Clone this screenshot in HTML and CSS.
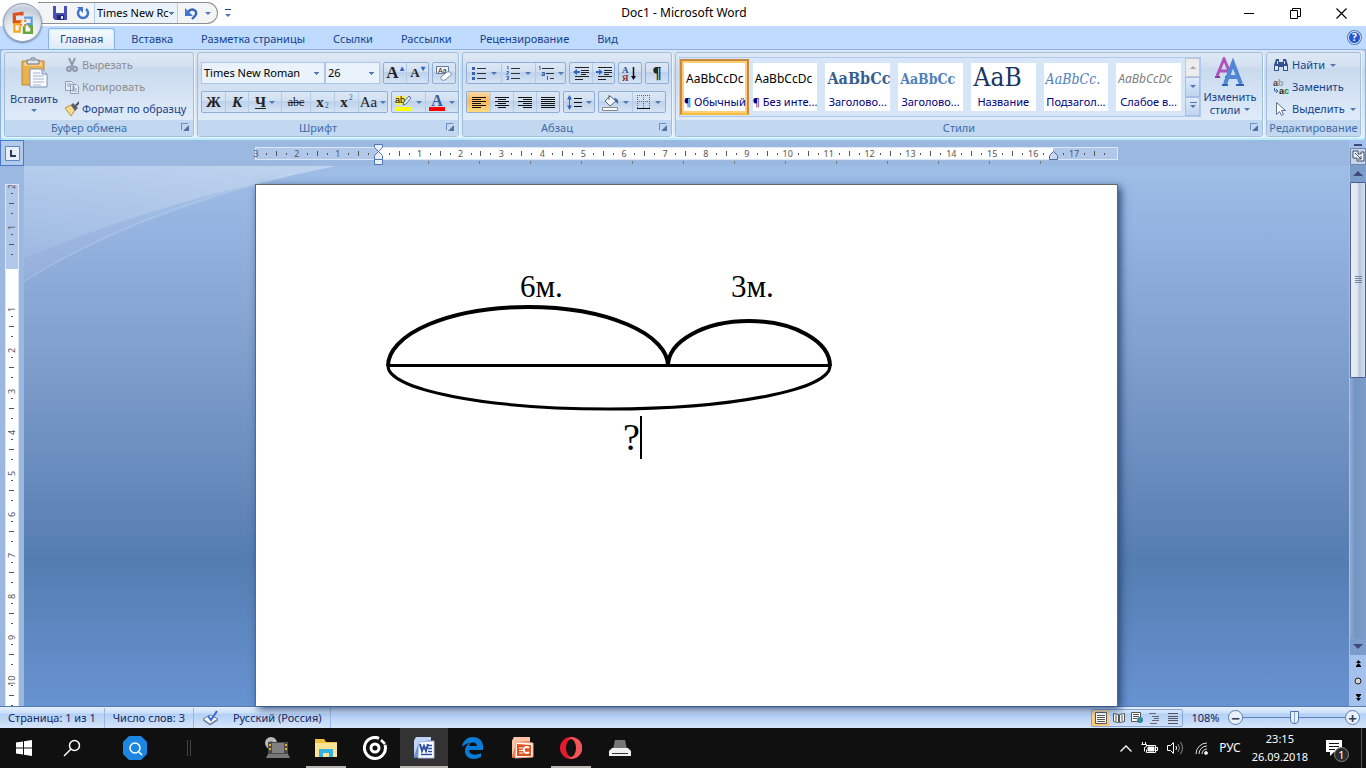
FILE: index.html
```html
<!DOCTYPE html>
<html lang="ru">

<head>
  <meta charset="UTF-8">
  <meta name="viewport" content="width=device-width, initial-scale=1.0">
  <title>Doc1 - Microsoft Word</title>
  <link rel="stylesheet" href="styles.css">
</head>

<body>
  <div class="window">

    <header class="titlebar">
      <div class="quick-wrap">
        <div class="quick">
          <button class="quick-btn" aria-label="Сохранить">
            <svg width="14" height="14" viewBox="0 0 14 14"><path d="M0 0h14v14H2L0 12z" fill="#4a4fb4"/><path d="M3 0h8v7H3z" fill="#f2f5ff"/><path d="M4 9h7v5H4z" fill="#23276f"/><path d="M8 10h2v3H8z" fill="#dde4ff"/></svg>
          </button>
          <button class="quick-btn" aria-label="Повторить">
            <svg width="14" height="14" viewBox="0 0 14 14"><path d="M4 3a5 5 0 1 0 6 0" fill="none" stroke="#3e74cf" stroke-width="2.400"/><path d="M1 1h6v6z" fill="#3e74cf"/></svg>
          </button>
          <select class="quick-font" aria-label="Шрифт">
            <option>Times New Rc</option>
          </select>
          <button class="quick-btn quick-undo" aria-label="Отменить">
            <svg width="14" height="13" viewBox="0 0 14 13"><path d="M4 5c4-5 11-1 7 4L8 12" fill="none" stroke="#3566bd" stroke-width="2.400"/><path d="M1 1v8h8z" fill="#3f78d2"/></svg>
            <i class="arrow"></i>
          </button>
        </div>
        <button class="quick-more" aria-label="Настройка панели"><i class="arrow"></i></button>
      </div>
      <h1 class="title">Doc1 - Microsoft Word</h1>
      <div class="win-btns">
        <button aria-label="Свернуть"><svg width="11" height="11" viewBox="0 0 11 11"><path d="M0 5.500h10" stroke="#000"/></svg></button>
        <button aria-label="Восстановить"><svg width="11" height="11" viewBox="0 0 11 11"><path d="M.5 2.500h7v8h-7zM2.500 2V.5h8v8H8" fill="none" stroke="#000"/></svg></button>
        <button aria-label="Закрыть"><svg width="11" height="11" viewBox="0 0 11 11"><path d="M.5.5l10 10M10.500.5l-10 10" stroke="#000" stroke-width="1.200"/></svg></button>
      </div>
    </header>

    <button class="office" aria-label="Office">
      <svg width="24" height="26" viewBox="0 0 22 24" fill="none" stroke-width="3">
        <path d="M10 5V3L3 4v7h6" stroke="#e0501c"/>
        <path d="M12 7h7v6h-5" stroke="#5b9ce0" stroke-width="2"/>
        <path d="M9 13H3v7h5v-5" stroke="#f5a81e" stroke-width="2"/>
        <path d="M12 15v6h7v-6h-3" stroke="#6aa53a" stroke-width="2.500"/>
        <path d="M8 9h2v2H8zM12 9h2v2h-2zM8 13h2v2H8zM12 13h2v2h-2z" fill="#f08a1c"/>
      </svg>
    </button>

    <nav class="tabs">
      <a href="#" class="tab tab-active">Главная</a>
      <a href="#" class="tab">Вставка</a>
      <a href="#" class="tab">Разметка страницы</a>
      <a href="#" class="tab">Ссылки</a>
      <a href="#" class="tab">Рассылки</a>
      <a href="#" class="tab">Рецензирование</a>
      <a href="#" class="tab">Вид</a>
      <button class="help" aria-label="Справка">?</button>
    </nav>

    <div class="ribbon">
      <!-- Буфер обмена -->
      <section class="group clipboard">
        <div class="group-body">
          <button class="big-btn">
            <svg width="28" height="32" viewBox="0 0 28 32">
              <path d="M2 4h22v24H2z" fill="#e9b050" stroke="#c08a35"/><path d="M4 5h18v4H4z" fill="#f6cf85"/>
              <path d="M7 3h3c0-3 6-3 6 0h3v4H7z" fill="#dfe3ea" stroke="#6f7682"/><path d="M11 3h4" stroke="#6f7682"/>
              <path d="M10 12h12l5 5v13H10z" fill="#fafcff" stroke="#7a92b5"/><path d="M22 12v5h5" fill="#cfdcf0" stroke="#7a92b5"/>
              <path d="M13 16h7M13 19h11M13 22h11M13 25h11M13 28h8" stroke="#9fb2d0"/>
            </svg>
            <span>Вставить</span>
            <i class="arrow"></i>
          </button>
          <div class="rows">
            <button class="row-btn muted" disabled>
              <svg width="14" height="16" viewBox="1 0 14 16" fill="none" stroke="#8f9bad" stroke-width="2"><path d="M5 1l4 9M11 1L7 10"/><circle cx="5" cy="12" r="2"/><circle cx="11" cy="12" r="2"/></svg>
              Вырезать
            </button>
            <button class="row-btn muted" disabled>
              <svg width="14" height="16" viewBox="1 0 14 16"><path d="M1.500 2.500h6l2 2v7h-8zM6.500 5.500h6l2 2v7h-8z" fill="#e8edf6" stroke="#8f9fb8"/><path d="M3 5h4M3 7h3M8 8h3M8 10h5M8 12h5" stroke="#8f9fb8"/></svg>
              Копировать
            </button>
            <button class="row-btn">
              <svg width="14" height="16" viewBox="1 1 14 14"><path d="M1 7l6-3 4 5-4 6z" fill="#f7dc8c" stroke="#b98d3a"/><path d="M7 4l2-2 5 5-3 3z" fill="#59606e"/><path d="M11 4l4-4 1 2-4 4z" fill="#4c5363"/></svg>
              Формат по образцу
            </button>
          </div>
        </div>
        <footer class="group-name">Буфер обмена<i class="launcher"></i></footer>
      </section>

      <!-- Шрифт -->
      <section class="group font">
        <div class="group-body tools">
          <div class="tool-row">
            <div class="combos">
              <select class="combo combo-font" aria-label="Шрифт"><option>Times New Roman</option></select>
              <select class="combo combo-size" aria-label="Размер"><option>26</option></select>
            </div>
            <div class="btns">
              <button class="b22 glyph big-a" aria-label="Увеличить размер">A<sup>▴</sup></button>
              <button class="b22 glyph small-a" aria-label="Уменьшить размер">A<sup>▾</sup></button>
            </div>
            <div class="btns">
              <button class="b22" aria-label="Очистить формат">
                <svg width="18" height="17" viewBox="0 0 18 17"><path d="M1.500 1.500h12v7h-12z" fill="#f4f7fc" stroke="#62789c"/><text x="3" y="8" font-size="7" font-family="Liberation Sans" fill="#222">Aa</text><path d="M6 12l6-5q5-1 4 3l-6 5q-5 1-4-3z" fill="#fff" stroke="#7a8aa8"/></svg>
              </button>
            </div>
          </div>
          <div class="tool-row">
            <div class="btns">
              <button class="b23 glyph"><b>Ж</b></button>
              <button class="b23 glyph"><b><em>К</em></b></button>
              <button class="b32 glyph"><b><u>Ч</u></b><i class="arrow"></i></button>
              <button class="b28 glyph strike"><s>abc</s></button>
              <button class="b24 glyph"><b>x</b><sub>2</sub></button>
              <button class="b24 glyph"><b>x</b><sup>2</sup></button>
              <button class="b28 glyph">Aa<i class="arrow"></i></button>
            </div>
            <div class="btns">
              <button class="b32" aria-label="Цвет выделения">
                <svg width="17" height="17" viewBox="0 0 17 17"><path d="M0 2h10v9H0z" fill="#f4ee5a"/><text x="0" y="9" font-size="9" font-family="Liberation Sans">ab</text><path d="M9 8l5-6 2 2-5 6-3 1z" fill="#e9eef8" stroke="#5a6f9a"/><path d="M0 13h16v4H0z" fill="#ff0"/></svg>
                <i class="arrow"></i>
              </button>
              <button class="b32 font-color" aria-label="Цвет текста"><span>A</span><i class="arrow"></i></button>
            </div>
          </div>
        </div>
        <footer class="group-name">Шрифт<i class="launcher"></i></footer>
      </section>

      <!-- Абзац -->
      <section class="group para">
        <div class="group-body tools">
          <div class="tool-row">
            <div class="btns">
              <button class="b34" aria-label="Маркеры"><svg width="15" height="14" viewBox="0 0 15 14"><path d="M5 2.500h9M5 7.500h9M5 12.500h9" stroke="#333"/><path d="M0 1h3v3H0zM0 6h3v3H0zM0 11h3v3H0z" fill="#3c63ae"/></svg><i class="arrow"></i></button>
              <button class="b34" aria-label="Нумерация"><svg width="15" height="14" viewBox="0 0 15 14"><path d="M5 2.500h9M5 7.500h9M5 12.500h9" stroke="#333"/><path d="M1 .5h1v3M.5 5.500h2v1l-2 1.500h2M.5 10.500h2v3h-2M1 12h1" fill="none" stroke="#3c63ae"/></svg><i class="arrow"></i></button>
              <button class="b29" aria-label="Многоуровневый список"><svg width="16" height="15" viewBox="0 0 16 15"><path d="M4 2.500h12M8 7.500h8M12 12.500h4" stroke="#333"/><path d="M1 .5h1V4M4 6.500h2.500v3H4v-1.500h2M9.500 10v4" fill="none" stroke="#3c63ae"/></svg><i class="arrow"></i></button>
            </div>
            <div class="btns">
              <button class="b22" aria-label="Уменьшить отступ"><svg width="16" height="14" viewBox="0 0 16 14"><path d="M2 1.500h14M8 4.500h8M8 6.500h8M8 8.500h5M2 10.500h14M2 13.500h8" stroke="#222"/><path d="M0 6l4-3v2h3v2H4v2z" fill="#2f66c4"/></svg></button>
              <button class="b22" aria-label="Увеличить отступ"><svg width="16" height="14" viewBox="0 0 16 14"><path d="M2 1.500h14M8 4.500h8M8 6.500h8M8 8.500h5M2 10.500h14M2 13.500h8" stroke="#222"/><path d="M7 6L3 3v2H0v2h3v2z" fill="#2f66c4"/></svg></button>
            </div>
            <div class="btns">
              <button class="b22" aria-label="Сортировка"><svg width="16" height="17" viewBox="0 0 16 17"><text x="0" y="8" font-size="9" font-weight="700" font-family="Liberation Serif" fill="#2a4f9c">А</text><text x="0" y="16" font-size="9" font-weight="700" font-family="Liberation Serif" fill="#8c2f2f">Я</text><path d="M11.500 2v11" stroke="#111" stroke-width="1.500"/><path d="M9 11h5l-2.500 4z" fill="#111"/></svg></button>
            </div>
            <div class="btns">
              <button class="b22 glyph pilcrow" aria-label="Знаки абзаца">¶</button>
            </div>
          </div>
          <div class="tool-row">
            <div class="btns">
              <button class="b23 pressed" aria-label="По левому краю"><svg width="14" height="11" viewBox="0 0 14 11"><path d="M0 .5h14M0 2.500h9M0 4.500h14M0 6.500h9M0 8.500h14M0 10.500h9" stroke="#111"/></svg></button>
              <button class="b23" aria-label="По центру"><svg width="14" height="11" viewBox="0 0 14 11"><path d="M0 .5h14M3 2.500h8M0 4.500h14M3 6.500h8M0 8.500h14M3 10.500h8" stroke="#111"/></svg></button>
              <button class="b23" aria-label="По правому краю"><svg width="14" height="11" viewBox="0 0 14 11"><path d="M0 .5h14M5 2.500h9M0 4.500h14M5 6.500h9M0 8.500h14M5 10.500h9" stroke="#111"/></svg></button>
              <button class="b23" aria-label="По ширине"><svg width="14" height="11" viewBox="0 0 14 11"><path d="M0 .5h14M0 2.500h14M0 4.500h14M0 6.500h14M0 8.500h14M0 10.500h14" stroke="#111"/></svg></button>
            </div>
            <div class="btns">
              <button class="b29" aria-label="Интервал"><svg width="15" height="15" viewBox="0 0 15 15"><path d="M7 3.500h8M7 7.500h8M7 11.500h8" stroke="#111"/><path d="M2.500 3v9" stroke="#2f66c4"/><path d="M0 4.500L2.500 0 5 4.500zM0 10.500L2.500 15 5 10.500z" fill="#2f66c4"/></svg><i class="arrow"></i></button>
            </div>
            <div class="btns">
              <button class="b32" aria-label="Заливка"><svg width="17" height="17" viewBox="0 0 17 17"><path d="M3 7l5-5 6 5-6 5z" fill="#f3f6fb" stroke="#59667e"/><path d="M7 6V1" stroke="#59667e"/><path d="M12 4q5 0 4 6-2-2-3-3z" fill="#3a64ae"/><path d="M.5 13.500h15v3H.5z" fill="#fff" stroke="#888"/></svg><i class="arrow"></i></button>
              <button class="b32" aria-label="Границы"><svg width="14" height="14" viewBox="0 0 14 14"><path d="M.5 0v13M6.500 0v13M12.500 0v13M0 .5h13M0 6.500h13" stroke="#666" stroke-dasharray="1 1"/><path d="M0 13.500h13" stroke="#111"/></svg><i class="arrow"></i></button>
            </div>
          </div>
        </div>
        <footer class="group-name">Абзац<i class="launcher"></i></footer>
      </section>

      <!-- Стили -->
      <section class="group styles">
        <div class="group-body">
          <div class="gallery">
            <button class="style style-active"><span class="sample">AaBbCcDc</span><span class="style-name">¶ Обычный</span></button>
            <button class="style"><span class="sample">AaBbCcDc</span><span class="style-name">¶ Без инте...</span></button>
            <button class="style"><span class="sample heading1">AaBbCc</span><span class="style-name">Заголово...</span></button>
            <button class="style"><span class="sample heading2">AaBbCc</span><span class="style-name">Заголово...</span></button>
            <button class="style"><span class="sample name">АаВ</span><span class="style-name">Название</span></button>
            <button class="style"><span class="sample subtitle">AaBbCc.</span><span class="style-name">Подзагол...</span></button>
            <button class="style"><span class="sample weak">AaBbCcDc</span><span class="style-name">Слабое в...</span></button>
            <div class="gallery-scroll">
              <button class="off" aria-label="Вверх"><i class="arrow up"></i></button>
              <button aria-label="Вниз"><i class="arrow"></i></button>
              <button aria-label="Все стили"><i class="arrow over"></i></button>
            </div>
          </div>
          <button class="big-btn">
            <svg width="30" height="28" viewBox="0 0 30 28"><path d="M2 18L9 1l6 14M5 13h8" fill="none" stroke="#b052b8" stroke-width="3"/><path d="M0 19h5M10 19h3" stroke="#8a3a98" stroke-width="2"/><path d="M10 26L18 5l8 21M13 19h10" fill="none" stroke="#4f87d6" stroke-width="4"/><path d="M7 27h6M21 27h8" stroke="#2f62b0" stroke-width="2"/></svg>
            <span>Изменить</span>
            <span>стили<i class="arrow"></i></span>
          </button>
        </div>
        <footer class="group-name">Стили<i class="launcher"></i></footer>
      </section>

      <!-- Редактирование -->
      <section class="group edit">
        <div class="group-body rows">
          <button class="row-btn">
            <svg width="16" height="16" viewBox="0 0 16 16"><path d="M3 2h3v3h4V2h3l2 6v6h-5v-4H6v4H1V8z" fill="#32518f"/><path d="M2 9h3v4H2zM11 9h3v4h-3zM4 4h1v3H4zM11 4h1v3h-1z" fill="#dbe7fa"/></svg>
            Найти<i class="arrow"></i>
          </button>
          <button class="row-btn">
            <svg width="16" height="16" viewBox="0 0 16 16"><text x="0" y="7" font-size="9" font-weight="700" font-family="Liberation Sans" fill="#444">a</text><text x="5" y="7" font-size="9" font-weight="700" font-family="Liberation Sans" fill="#999">b</text><text x="6" y="15" font-size="9" font-weight="700" font-family="Liberation Sans" fill="#222">a</text><text x="11" y="15" font-size="9" font-weight="700" font-family="Liberation Sans" fill="#128a2c">c</text><path d="M1.500 9v3H5M3 10l2 2-2 2" fill="none" stroke="#4068b0"/></svg>
            Заменить
          </button>
          <button class="row-btn">
            <svg width="16" height="16" viewBox="0 0 16 16"><path d="M3.500 1.500v12l3-3 2 4 2-1-2-4h4z" fill="#fff" stroke="#5b6f90"/></svg>
            Выделить<i class="arrow"></i>
          </button>
        </div>
        <footer class="group-name">Редактирование</footer>
      </section>
    </div>

    <main class="work">
      <div class="side">
        <button class="tabstop" aria-label="Табуляция"><svg width="15" height="15" viewBox="0 0 15 15"><path d="M.5.5h14v14H.5z" fill="#e6eefb" stroke="#5f86c4"/><path d="M6 4v6h5" fill="none" stroke="#2a3a5c" stroke-width="2"/></svg></button>
        <div class="vruler">
          <span>2</span><span>1</span><span></span><span>1</span><span>2</span><span>3</span><span>4</span><span>5</span><span>6</span><span>7</span><span>8</span><span>9</span><span>10</span>
        </div>
      </div>

      <div class="center">
        <div class="hruler-wrap">
          <div class="hruler">
            <span>3</span><span>2</span><span>1</span><span></span><span>1</span><span>2</span><span>3</span><span>4</span><span>5</span><span>6</span><span>7</span><span>8</span><span>9</span><span>10</span><span>11</span><span>12</span><span>13</span><span>14</span><span>15</span><span>16</span><span>17</span>
            <svg class="indent indent-left" width="10" height="22" viewBox="0 0 10 22"><path d="M.5.500h8v3l-4 4 4 4v4h-8v-4l4-4-4-4zM.5 15.500h8v5h-8z" fill="#e9f0fb" stroke="#4f77b8"/></svg>
            <svg class="indent indent-right" width="10" height="9" viewBox="0 0 10 9"><path d="M.5 8.500v-4l4-4 4 4v4z" fill="#c9d8ee" stroke="#4f6da0"/></svg>
          </div>
          <div class="stops"></div>
        </div>
        <div class="desk">
          <svg class="swoosh" width="312" height="117" viewBox="0 0 312 117">
            <defs><linearGradient id="sw" x1="0" y1="1" x2="1" y2="0"><stop offset="0" stop-color="#fff" stop-opacity=".12"/><stop offset="1" stop-color="#fff" stop-opacity=".34"/></linearGradient></defs>
            <path d="M0 0h312Q130 36 0 93z" fill="url(#sw)"/>
            <path d="M312 0Q130 36 0 93v23Q120 42 312 0z" fill="#fff" opacity=".07"/>
            <path d="M0 115Q110 46 270 8" fill="none" stroke="#fff" opacity=".2"/>
          </svg>
          <article class="page">
            <svg class="drawing" width="480" height="210" viewBox="0 0 480 210">
              <g fill="none" stroke="#000">
                <path d="M10 106a140 59 0 0 1 280 0a81 45 0 0 1 162 0" stroke-width="4"/>
                <path d="M10 105.500h442" stroke-width="3"/>
                <path d="M10 106a221 43 0 0 0 442 0" stroke-width="3"/>
              </g>
              <text x="142" y="37" font-size="31">6м.</text>
              <text x="353" y="37" font-size="31">3м.</text>
              <text x="245" y="190" font-size="38">?</text>
              <path d="M263 156v43" stroke="#000" stroke-width="2"/>
            </svg>
          </article>
        </div>
      </div>

      <div class="vscroll">
        <div class="split"></div>
        <button class="ruler-toggle" aria-label="Линейка"><svg width="13" height="13" viewBox="0 0 13 13"><path d="M1 1h5v3h3V2h3v9H5V8H1z" fill="#eef4fc" stroke="#3f4c66"/><path d="M3 3l6 6M6 9h3V6" fill="none" stroke="#3f4c66"/></svg></button>
        <button class="scroll-btn" aria-label="Вверх"><i class="arrow up"></i></button>
        <div class="track"><div class="thumb"></div></div>
        <button class="scroll-btn" aria-label="Вниз"><i class="arrow"></i></button>
        <div class="browse">
          <button aria-label="Предыдущая страница"><svg width="7" height="7" viewBox="0 0 7 7"><path d="M3.500 0L6 3H1zM3.500 3L6 6H1zM1 6h5v1H1z"/></svg></button>
          <button aria-label="Объект перехода"><svg width="8" height="8" viewBox="0 0 8 8"><circle cx="4" cy="4" r="3" fill="#d4d4d4" stroke="#222"/></svg></button>
          <button aria-label="Следующая страница"><svg width="7" height="7" viewBox="0 0 7 7"><path d="M1 0h5v1H1zM3.500 4L6 1H1zM3.500 7L6 4H1z"/></svg></button>
        </div>
      </div>
    </main>

    <footer class="status">
      <button class="stat">Страница: 1 из 1</button>
      <button class="stat">Число слов: 3</button>
      <button class="stat stat-lang">
        <svg width="17" height="16" viewBox="0 0 17 16"><path d="M1 9l7-4 8 4-8 5z" fill="#f5f7fb" stroke="#6b7c9c"/><path d="M1 10l7 5 8-5" fill="none" stroke="#6b7c9c"/><path d="M6 6l3 4 6-9" fill="none" stroke="#3a6bcb" stroke-width="2"/></svg>
        Русский (Россия)
      </button>
      <div class="views">
        <button class="pressed" aria-label="Разметка страницы"><svg width="12" height="12" viewBox="0 0 12 12"><path d="M.5.5h11v11H.5z" fill="#fff" stroke="#555"/><path d="M2 3.500h8M2 5.500h8M2 7.500h8M2 9.500h8" stroke="#555"/></svg></button>
        <button aria-label="Режим чтения"><svg width="12" height="12" viewBox="0 0 12 12"><path d="M.5 1.500l5 1v8l-5-1zM11.500 1.500l-5 1v8l5-1z" fill="#fff" stroke="#555"/><path d="M2 4h2M2 6h2M2 8h2M8 4h2M8 6h2M8 8h2" stroke="#555"/></svg></button>
        <button aria-label="Веб-документ"><svg width="12" height="12" viewBox="0 0 12 12"><path d="M.5.5h9v9h-9z" fill="#fff" stroke="#555"/><path d="M2 2.500h6M2 4.500h6M2 6.500h4" stroke="#555"/><circle cx="9" cy="8" r="3" fill="#2f7fae"/><path d="M7 8l2-2 1 2-1 2z" fill="#44a455"/></svg></button>
        <button aria-label="Структура"><svg width="12" height="12" viewBox="0 0 12 12"><path d="M0 1.500h7M3 4.500h7M5 6.500h5M3 8.500h7M1 11.500h7" stroke="#667"/></svg></button>
        <button aria-label="Черновик"><svg width="12" height="12" viewBox="0 0 12 12"><path d="M1 1.500h10M1 4.500h10M1 6.500h10M1 8.500h10M1 11.500h10" stroke="#556"/></svg></button>
      </div>
      <button class="percent">108%</button>
      <button class="round" aria-label="Уменьшить">−</button>
      <input class="zoom" type="range" min="0" max="200" value="100" aria-label="Масштаб">
      <button class="round" aria-label="Увеличить">+</button>
    </footer>

    <div class="taskbar">
      <button class="task sys" aria-label="Пуск"><svg width="16" height="16" viewBox="0 0 16 16" fill="#fff"><path d="M0 2.500L7 1.500v6H0zM8 1.300L16 0v7.500H8zM0 8.500h7v6L0 13.500zM8 8.500h8V16l-8-1.300z"/></svg></button>
      <button class="task sys" aria-label="Поиск"><svg width="18" height="18" viewBox="0 0 18 18" fill="none" stroke="#fff" stroke-width="1.500"><circle cx="11.500" cy="6.500" r="5"/><path d="M8 10l-7 7"/></svg></button>
      <button class="task finder" aria-label="Найти"><svg width="24" height="24" viewBox="0 0 24 24"><path d="M6 0h12l6 6v12l-6 6H6l-6-6V6z" fill="#1c86e2"/><circle cx="12" cy="12" r="5" fill="none" stroke="#fff" stroke-width="1.500"/><path d="M16 16l3 3" stroke="#fff" stroke-width="1.500"/></svg></button>
      <i class="grip"></i>
      <div class="apps">
        <button class="task" aria-label="Видео"><svg width="26" height="22" viewBox="0 0 26 22"><circle cx="7" cy="6" r="6" fill="#bbb"/><circle cx="7" cy="6" r="2" fill="#666"/><path d="M4 5h20v12H4z" fill="#4b4b45"/><path d="M8 6h12v10H8z" fill="#808080"/><path d="M5 7h2v2H5zM5 11h2v2H5zM21 7h2v2h-2zM21 11h2v2h-2z" fill="#e8b020"/><path d="M4 17h20l2 4H2z" fill="#777"/></svg></button>
        <button class="task open" aria-label="Проводник"><svg width="22" height="18" viewBox="0 0 22 18"><path d="M0 0h9l2 3h11v15H0z" fill="#f3c03c"/><path d="M0 4h22v14H0z" fill="#ffe394"/><path d="M4 18v-8h14v8h-4v-4H8v4z" fill="#36b0e2"/></svg></button>
        <button class="task" aria-label="Музыка"><svg width="24" height="24" viewBox="0 0 24 24" fill="none" stroke="#fff" stroke-width="3"><path d="M16 2.300A10.500 10.500 0 1 0 22 9"/><circle cx="12" cy="12" r="4"/><path d="M18 4l4 4" stroke-width="2.500"/></svg></button>
        <button class="task open current" aria-label="Word"><svg width="24" height="24" viewBox="0 0 24 24"><path d="M4 1h15v18l-17 3V5z" fill="#6e92d4"/><path d="M4 1h15v3L7 6 2 20V5z" fill="#c0d4f5"/><path d="M7 6l15-1v17H6z" fill="#fff" stroke="#a8bde6"/><path d="M8 8l2 7 2-5 2 5 2-7" fill="none" stroke="#2b4fa0" stroke-width="2"/><path d="M16 9.500h4M16 12.500h4M16 15.500h4M9 18.500h11" stroke="#2b4fa0" stroke-width="1.500"/></svg></button>
        <button class="task" aria-label="Edge"><svg width="22" height="22" viewBox="0 0 22 22"><path d="M0 10C1 3 6 0 11 0c6 0 10 4 10 9v4H7c0 5 7 6 12 3v4C12 24 3 22 3 14c0-4 2-7 6-8-4 0-7 2-9 4zm7-1h8c0-4-7-5-8 0z" fill="#0b7bd8"/></svg></button>
        <button class="task" aria-label="PowerPoint"><svg width="24" height="24" viewBox="0 0 24 24"><path d="M4 1h16v18L2 22V5z" fill="#ee7a50"/><path d="M4 1h16v4L7 6 2 20V5z" fill="#fbc4a8"/><path d="M6 6l17 1v14l-18 1z" fill="#fff" stroke="#f0a080"/><path d="M7 8l14 1v11H7z" fill="#e2511e"/><path d="M9 12h4M9 14.500h4M9 17h4" stroke="#fff"/><path d="M19 12a3 3 0 1 0 0 4" fill="none" stroke="#fff" stroke-width="2"/></svg></button>
        <button class="task open" aria-label="Opera"><svg width="22" height="24" viewBox="0 0 22 24"><ellipse cx="11" cy="12" rx="11" ry="11" fill="#e8192f"/><path d="M11 1c-6 3-6 19 0 22 15-1 15-21 0-22z" fill="#f2555a"/><ellipse cx="11" cy="12" rx="5" ry="9" fill="#101010"/></svg></button>
        <button class="task" aria-label="Принтер"><svg width="22" height="18" viewBox="0 0 22 18"><path d="M6 1h10l2 9H4z" fill="#777"/><path d="M3 9h16l3 3v5H0v-5z" fill="#f0f0f0"/><path d="M3 14.500h16" stroke="#333"/></svg></button>
      </div>
      <div class="tray">
        <svg width="12" height="7" viewBox="0 0 12 7"><path d="M.5 6.500L6 1l5.500 5.500" fill="none" stroke="#fff" stroke-width="1.300"/></svg>
        <svg width="17" height="12" viewBox="0 0 17 12" fill="none" stroke="#fff"><path d="M5.500 3.500h9v7h-9v-3M15 5.500h1.500v3H15"/><path d="M7 5h6v4H7z" fill="#fff"/><path d="M1.500 0v2M4.500 0v2M.5 2.500h5v2l-2 1v4"/></svg>
        <svg width="17" height="14" viewBox="0 0 17 14" fill="none" stroke="#fff"><path d="M.5 4.500h3l3-3v11l-3-3h-3z"/><path d="M9 5q1 2 0 4"/><path d="M11 3q3 4 0 8M13.500 1q4 6 0 12" stroke="#888"/></svg>
        <svg class="wifi" width="13" height="13" viewBox="0 0 13 13" fill="none" stroke="#ddd"><path d="M1 12A11 11 0 0 1 12 1M4 12a8 8 0 0 1 8-8M7 12a5 5 0 0 1 5-5"/><circle cx="11" cy="11" r="1.500" fill="#fff"/></svg>
        <span class="lang">РУС</span>
        <time class="clock"><span>23:15</span><span>26.09.2018</span></time>
        <button class="notes" aria-label="Уведомления">
          <svg width="16" height="16" viewBox="0 0 16 16"><path d="M0 0h16v12H8l-4 4v-4H0z" fill="#fff"/><path d="M3 3.500h10M3 6.500h10M3 9.500h6" stroke="#101010"/></svg>
          <b>1</b>
        </button>
      </div>
    </div>

  </div>
</body>

</html>
```
FILE: styles.css
```css
* {
  box-sizing: border-box;
  margin: 0;
  padding: 0;
}

body {
  font: 11px/16px "Noto Sans", "Open Sans", sans-serif;
  color: #15428b;
  background: #9ab8e0;
}

button,
select {
  font: inherit;
  color: inherit;
  border: 0;
  background: none;
  appearance: none;
}

a {
  color: inherit;
  text-decoration: none;
}

svg {
  display: block;
  flex: none;
}

.window {
  position: relative;
  display: flex;
  flex-direction: column;
  height: 100vh;
  overflow: hidden;
}

.arrow {
  flex: none;
  display: inline-block;
  border: 3px solid transparent;
  border-top-color: #5078b4;
  border-bottom: 0;
}

.arrow.up {
  border-top: 0;
  border-bottom: 3px solid #a0a4aa;
}

.arrow.over {
  position: relative;
}

.arrow.over::before {
  content: "";
  position: absolute;
  left: -3px;
  top: -6px;
  width: 7px;
  height: 1px;
  background: #5078b4;
}

/* title bar */

.titlebar {
  display: grid;
  grid-template-columns: 1fr auto 1fr;
  align-items: center;
  height: 26px;
  padding-left: 2px;
  background: #fff;
}

.quick-wrap {
  display: flex;
  align-items: center;
  gap: 7px;
  padding-left: 36px;
}

.quick {
  display: flex;
  height: 22px;
  width: 180px;
  padding-left: 10px;
  border: 1px solid #8b8f96;
  border-left: 0;
  border-radius: 0 11px 11px 0;
  background: #f3f4f6;
}

.quick-btn {
  display: flex;
  align-items: center;
  justify-content: center;
  gap: 5px;
  width: 23px;
}

.quick-font {
  width: 84px;
  padding-left: 2px;
  color: #000;
  border: 1px solid #b7cdea;
  border-width: 0 1px;
  background-color: #eaf2fb;
  background-image: linear-gradient(#5078b4, #5078b4), linear-gradient(#5078b4, #5078b4), linear-gradient(#5078b4, #5078b4);
  background-size: 5px 1px, 3px 1px, 1px 1px;
  background-position: 74px 9px, 75px 10px, 76px 11px;
  background-repeat: no-repeat;
}

.quick-undo {
  flex: 1;
  gap: 7px;
}

.quick-more {
  width: 6px;
  border-top: 1px solid #15428b;
  line-height: 6px;
}

.title {
  font-size: 12px;
  font-weight: 400;
  color: #000;
}

.win-btns {
  display: flex;
  justify-content: flex-end;
  padding-right: 2px;
}

.win-btns button {
  display: grid;
  place-items: center;
  width: 46px;
  height: 26px;
}

.office {
  position: absolute;
  left: 3px;
  top: 3px;
  z-index: 2;
  display: grid;
  place-items: center;
  width: 39px;
  height: 39px;
  border: 1px solid #8c9aae;
  border-radius: 50%;
  background: radial-gradient(circle at 50% 90%, #fff 15%, #dfe5ee 55%, #c3ccd9 75%, #f2f5f9);
  box-shadow: 0 1px 2px #6680a4;
}

/* tabs */

.tabs {
  display: flex;
  gap: 4px;
  height: 23px;
  padding: 2px 5px 0 48px;
  background: #bfdbff;
}

.tab {
  padding: 3px 12px 0;
}

.tab-active {
  padding: 2px 11px 0;
  border: 1px solid #8db2e3;
  border-bottom: 0;
  border-radius: 3px 3px 0 0;
  background: linear-gradient(#f6faff, #dfeaf7);
  box-shadow: inset 0 0 2px 1px #c5f1ff;
}

.help {
  width: 13px;
  height: 13px;
  margin: 3px 0 0 auto;
  color: #fff;
  font-size: 10px;
  font-weight: 700;
  line-height: 11px;
  border: 1px solid #e8f1ff;
  border-radius: 50%;
  background: #2458cf;
  box-shadow: 0 0 0 1px #5a7fc0;
}

/* ribbon */

.ribbon {
  display: flex;
  gap: 3px;
  height: 91px;
  padding: 2px 4px 1px 3px;
  border: 1px solid #8db2e3;
  border-bottom: 2px solid #b9ecfa;
  border-radius: 4px;
  background: linear-gradient(#dbe6f4, #cfdef1 20%, #c9d9ee 21%, #e0edfb);
}

.group {
  display: flex;
  flex-direction: column;
  border: 1px solid #9fbfdf;
  border-radius: 3px;
  background: linear-gradient(#dfe9f5, #d2dff0 17%, #c9daee 18%, #dfebf9 80%);
  box-shadow: 1px 1px 0 #eff6fd;
  white-space: nowrap;
}

.clipboard {
  width: 190px;
}

.font {
  width: 262px;
}

.para {
  width: 210px;
}

.styles {
  flex: 1;
  min-width: 0;
}

.edit {
  width: 95px;
}

.group-body {
  display: flex;
  flex: 1;
  min-height: 0;
}

.group-name {
  position: relative;
  height: 16px;
  padding-right: 20px;
  text-align: center;
  color: #3e6aaa;
  background: #c1d8f0;
}

.edit .group-name {
  padding: 0;
}

.launcher {
  position: absolute;
  right: 4px;
  top: 3px;
  width: 8px;
  height: 8px;
  border: 1px solid #6a8fc2;
  border-right-color: #dfeaf8;
  border-bottom-color: #dfeaf8;
}

.launcher::after {
  content: "";
  position: absolute;
  right: -1px;
  bottom: -1px;
  border: 3px solid transparent;
  border-right-color: #52719f;
  border-bottom-color: #52719f;
}

.big-btn {
  display: flex;
  flex-direction: column;
  align-items: center;
  width: 58px;
  padding-top: 4px;
  line-height: 13px;
}

.big-btn span:first-of-type {
  padding-top: 3px;
}

.clipboard .big-btn .arrow {
  margin-top: 4px;
}

.styles .big-btn svg {
  height: 30px;
}

.big-btn span .arrow {
  margin: 0 0 3px 4px;
}

.rows {
  flex-direction: column;
  display: flex;
  padding-top: 1px;
}

.row-btn {
  flex: none;
  display: flex;
  align-items: center;
  gap: 3px;
  height: 22px;
}

.row-btn .arrow {
  margin-left: 2px;
}

.clipboard .rows {
  padding-left: 2px;
}

.edit .rows {
  padding-left: 6px;
}

.muted {
  color: #8d8d8d;
}

.tools {
  flex-direction: column;
  gap: 7px;
  padding: 9px 3px 0;
}

.tool-row {
  display: flex;
  gap: 3px;
}

.combos {
  display: flex;
}

.combo {
  height: 22px;
  padding-left: 2px;
  color: #000;
  border: 1px solid #abc7ec;
  background-color: #eaf2fb;
  background-image: linear-gradient(#5078b4, #5078b4), linear-gradient(#5078b4, #5078b4), linear-gradient(#5078b4, #5078b4);
  background-size: 5px 1px, 3px 1px, 1px 1px;
  background-position: right 5px top 9px, right 6px top 10px, right 7px top 11px;
  background-repeat: no-repeat;
}

.combo-font {
  width: 124px;
}

.combo-size {
  width: 55px;
}

.btns {
  display: flex;
  height: 22px;
  border: 1px solid #8faed6;
  border-radius: 2px;
  background: linear-gradient(#dde8f6, #d0dff1 45%, #bdd1ea 46%, #d5e4f5);
}

.btns button {
  display: flex;
  align-items: center;
  justify-content: center;
  gap: 4px;
}

.btns button + button {
  border-left: 1px solid #b4cbe8;
}

.b22 {
  width: 22px;
}

.b23 {
  width: 23px;
}

.b24 {
  width: 24px;
}

.b28 {
  width: 29px;
}

.b29 {
  width: 30px;
}

.b32 {
  width: 33px;
}

.b34 {
  width: 34px;
}

.glyph {
  color: #222;
  font: 15px/20px "Liberation Serif", serif;
}

.btns .glyph {
  gap: 1px;
}

.glyph sup,
.glyph sub {
  color: #2f5fb8;
  font-size: 8px;
  line-height: 8px;
}

.glyph sup {
  align-self: flex-start;
  margin-top: 2px;
}

.glyph sub {
  align-self: flex-end;
  margin-bottom: 2px;
}

.btns .glyph .arrow {
  margin-left: 2px;
}

.big-a {
  font-size: 17px;
  font-weight: 700;
}

.small-a {
  font-size: 13px;
  font-weight: 700;
}

.pilcrow {
  font-size: 17px;
  font-weight: 700;
}

.strike {
  font-size: 12px;
}

.font-color span {
  width: 16px;
  height: 17px;
  color: #35589c;
  font: 700 16px/14px "Liberation Serif", serif;
  border-bottom: 4px solid #f00;
}

.pressed {
  background: linear-gradient(#fbd9a2, #fdb65f 45%, #fddb7e);
}

/* styles gallery */

.gallery {
  display: flex;
  flex: 1;
  min-width: 0;
  max-width: 522px;
  height: 60px;
  margin: 4px 0 0 3px;
  border: 1px solid #b0c9ea;
  background: #d6e5f8;
}

.style {
  flex: 1;
  min-width: 0;
  display: flex;
  flex-direction: column;
  align-items: stretch;
  margin: 1px 0;
  border: 4px solid transparent;
  background: #fff padding-box;
  overflow: hidden;
}

.style-active {
  border: 2px solid #c8893a;
  border-bottom-color: #f5bd3c;
  background: #fff;
  box-shadow: inset 0 0 0 2px #ffce78;
}

.style-active .sample,
.style-active .style-name {
  margin: 0 2px;
}

.style-active .sample {
  margin-top: 2px;
}

.sample {
  height: 31px;
  padding-left: 2px;
  color: #000;
  font-size: 12px;
  line-height: 32px;
  text-align: left;
  overflow: hidden;
  white-space: nowrap;
}

.style-name {
  color: #000080;
  line-height: 16px;
  text-align: center;
}

.heading1,
.heading2,
.name,
.subtitle {
  font-family: "DejaVu Serif Condensed", "DejaVu Serif", serif;
}

.heading1 {
  color: #365f91;
  font-size: 16px;
  font-weight: 700;
}

.heading2 {
  color: #4f81bd;
  font-size: 14px;
  font-weight: 700;
}

.name {
  color: #17365d;
  font-size: 26px;
  line-height: 28px;
}

.subtitle {
  color: #4f81bd;
  font-size: 14px;
  font-style: italic;
}

.weak {
  color: #808080;
  font-style: italic;
}

.gallery-scroll {
  display: flex;
  flex-direction: column;
  width: 15px;
}

.gallery-scroll button {
  flex: 1;
  display: grid;
  place-items: center;
  border: 1px solid #a5c0e4;
  background: linear-gradient(#dfeafa, #bfd4f0);
}

.gallery-scroll .off {
  background: #ececec;
  border-color: #c4c8ce;
}

/* work area */

.work {
  display: flex;
  flex: 1;
  min-height: 0;
}

.side {
  display: flex;
  flex-direction: column;
  width: 24px;
  overflow: hidden;
}

.tabstop {
  flex: none;
  display: grid;
  place-items: center;
  width: 24px;
  height: 26px;
  border: 1px solid #4a78cf;
  background: #b2c9ec;
}

.vruler {
  flex: 1;
  width: 14px;
  min-height: 0;
  margin: 18px 0 0 5px;
  border: 1px solid #dbe6f6;
  border-bottom: 0;
  background: linear-gradient(#b1c8eb 84px, #fff 84px);
  overflow: hidden;
}

.vruler span {
  display: block;
  height: 41px;
  background: linear-gradient(#555, #555) center 11px / 2px 1px,
    linear-gradient(#555, #555) center 21px / 5px 1px,
    linear-gradient(#555, #555) center 31px / 2px 1px;
  background-repeat: no-repeat;
  writing-mode: vertical-rl;
  transform: rotate(180deg);
  transform-origin: 6px 20px;
  color: #555;
  font-size: 9px;
  line-height: 12px;
  text-align: right;
}

.center {
  display: flex;
  flex-direction: column;
  flex: 1;
  min-width: 0;
}

.hruler-wrap {
  height: 26px;
  padding-top: 7px;
}

.hruler {
  position: relative;
  display: flex;
  width: 863px;
  height: 13px;
  margin: 0 auto;
  padding-right: 2px;
  border: 1px solid #dbe6f6;
  background: linear-gradient(to right, #b1c8eb 123px, #fff 123px 797px, #b1c8eb 797px);
}

.hruler span {
  flex: 1;
  height: 11px;
  background: linear-gradient(#555, #555) 25% center / 1px 2px,
    linear-gradient(#555, #555) 50% center / 1px 5px,
    linear-gradient(#555, #555) 75% center / 1px 2px;
  background-repeat: no-repeat;
  color: #555;
  font-size: 9px;
  line-height: 11px;
  text-align: center;
  text-indent: -41px;
  white-space: nowrap;
}

.indent {
  position: absolute;
}

.indent-left {
  left: 118px;
  top: -4px;
}

.indent-right {
  left: 793px;
  top: 3px;
}

.stops {
  width: 863px;
  height: 3px;
  margin: 1px auto 0;
  padding: 0 72px 0 123px;
  background: repeating-linear-gradient(to right, transparent 0 50px, #777 50px 51px) content-box;
}

.desk {
  position: relative;
  flex: 1;
  min-height: 0;
  padding-top: 18px;
  background: linear-gradient(#9ebee7, #93b1de 14%, #7f9fcd 35%, #6286b9 63%, #547db1 73%, #6793d1);
}

.swoosh {
  position: absolute;
  left: 0;
  top: 0;
}

.page {
  position: relative;
  width: 863px;
  height: 100%;
  margin: 0 auto;
  padding: 75px 0 0 122px;
  border: 1px solid #666;
  border-bottom: 0;
  background: #fff;
  box-shadow: 3px 3px 8px #2c4a78;
}

.drawing {
  font-family: "Liberation Serif", serif;
}

/* vertical scroll */

.vscroll {
  display: flex;
  flex-direction: column;
  width: 17px;
  padding-left: 1px;
  background: #a3c1ec;
}

.split {
  height: 2px;
  margin: 4px 4px 2px;
  background: #3a4c73;
}

.ruler-toggle {
  display: grid;
  place-items: center;
  height: 17px;
  border: 1px solid #7087ab;
  background: #c5d4ea;
}

.scroll-btn {
  display: grid;
  place-items: center;
  height: 17px;
  background: #7c9cca;
}

.scroll-btn .arrow {
  border-width: 5px 5px 0;
  border-top-color: #3f4a78;
}

.scroll-btn .arrow.up {
  border-width: 0 5px 5px;
  border-bottom-color: #3f4a78;
}

.track {
  flex: 1;
  background: linear-gradient(to right, #8fabd4, #7595c2 30%, #7c9cc8);
}

.thumb {
  height: 43%;
  border: 1px solid #4a5f96;
  border-radius: 1px;
  background: repeating-linear-gradient(#76849c 0 1px, transparent 1px 2px) center / 7px 8px no-repeat,
    linear-gradient(to right, #e9eef5, #dfe6ee 45%, #b7c6da 60%, #d7e2ef);
}

.browse {
  display: flex;
  flex-direction: column;
}

.browse button {
  display: grid;
  place-items: center;
  height: 17px;
}

/* status bar */

.status {
  display: flex;
  align-items: center;
  height: 22px;
  color: #15265e;
  border-top: 1px solid #567db1;
  background: linear-gradient(#e4effd, #cbdff9 30%, #b1cff6 32%, #d6e5f9);
}

.stat {
  display: flex;
  align-items: center;
  gap: 14px;
  height: 20px;
  padding: 0 8px;
  border-right: 1px solid #9bb8e0;
}

.views {
  display: flex;
  height: 18px;
  margin-left: auto;
  border: 1px solid #86a6d6;
  border-radius: 2px;
}

.views button {
  display: grid;
  place-items: center;
  width: 18px;
}

.views .pressed {
  background: linear-gradient(#fbd9a2, #fdc977);
}

.percent {
  width: 45px;
}

.round {
  width: 15px;
  height: 15px;
  color: #333f5c;
  font-size: 15px;
  font-weight: 700;
  line-height: 12px;
  border: 1px solid #5a7db4;
  border-radius: 50%;
  background: #e9f1fc;
}

.round:last-child {
  margin-right: 6px;
}

.zoom {
  width: 102px;
  height: 18px;
  appearance: none;
  background: linear-gradient(#5f83b8, #5f83b8) center / 100% 1px no-repeat;
}

.zoom::-webkit-slider-thumb {
  appearance: none;
  width: 9px;
  height: 13px;
  border: 1px solid #4d74b4;
  border-radius: 1px 1px 5px 5px;
  background: linear-gradient(to right, #e8f0fb 3px, #8aa8d6 3px 4px, #e8f0fb 4px);
}

/* taskbar */

.taskbar {
  display: flex;
  height: 40px;
  color: #fff;
  background: #101010;
}

.task {
  display: grid;
  place-items: center;
  width: 48px;
  height: 40px;
}

.finder {
  width: 78px;
}

.grip {
  width: 4px;
  height: 16px;
  margin: 12px 62px 0 13px;
  border: 1px solid #444;
  border-width: 0 1px;
}

.apps {
  display: flex;
  gap: 1px;
}

.open {
  background: linear-gradient(#b8b4b0, #b8b4b0) center bottom / 40px 2px no-repeat;
}

.current {
  background-color: #333;
  background-size: 48px 2px;
}

.tray {
  display: flex;
  align-items: center;
  gap: 9px;
  margin-left: auto;
}

.wifi {
  margin-left: 2px;
}

.lang {
  margin-left: 2px;
  font-size: 12px;
}

.clock {
  display: flex;
  flex-direction: column;
  align-items: center;
  margin-left: 2px;
  line-height: 18px;
}

.notes {
  position: relative;
  width: 45px;
  height: 40px;
  padding: 0 0 0 9px;
  border-right: 1px solid #555;
  margin-right: 4px;
}

.notes b {
  position: absolute;
  left: 17px;
  top: 19px;
  width: 15px;
  height: 15px;
  color: #fff;
  font-weight: 400;
  line-height: 14px;
  border: 1px solid #888;
  border-radius: 50%;
  background: #2b2b2b;
}
```
